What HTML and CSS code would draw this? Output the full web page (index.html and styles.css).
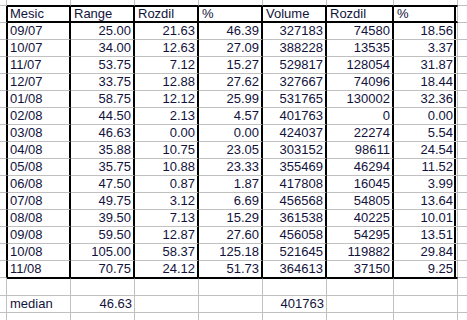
FILE: index.html
```html
<!DOCTYPE html>
<html>
<head>
<meta charset="utf-8">
<link rel="stylesheet" href="styles.css">
</head>
<body>
<div class="sheet">
  <div class="x"></div><div class="t"></div><div class="t"></div><div class="t"></div><div class="t"></div><div class="t"></div><div class="t"></div><div class="t"></div><div class="x"></div>

  <div class="lb"></div><div class="h a c">Mesic</div><div class="h c">Range</div><div class="h c">Rozdil</div><div class="h c">%</div><div class="h c">Volume</div><div class="h c">Rozdil</div><div class="h g">%</div><div></div>

  <div class="lb"></div><div class="a c">09/07</div><div class="c n">25.00</div><div class="c n">21.63</div><div class="c n">46.39</div><div class="c n">327183</div><div class="c n">74580</div><div class="g n">18.56</div><div></div>
  <div class="lb"></div><div class="a c">10/07</div><div class="c n">34.00</div><div class="c n">12.63</div><div class="c n">27.09</div><div class="c n">388228</div><div class="c n">13535</div><div class="g n">3.37</div><div></div>
  <div class="lb"></div><div class="a c">11/07</div><div class="c n">53.75</div><div class="c n">7.12</div><div class="c n">15.27</div><div class="c n">529817</div><div class="c n">128054</div><div class="g n">31.87</div><div></div>
  <div class="lb"></div><div class="a c">12/07</div><div class="c n">33.75</div><div class="c n">12.88</div><div class="c n">27.62</div><div class="c n">327667</div><div class="c n">74096</div><div class="g n">18.44</div><div></div>
  <div class="lb"></div><div class="a c">01/08</div><div class="c n">58.75</div><div class="c n">12.12</div><div class="c n">25.99</div><div class="c n">531765</div><div class="c n">130002</div><div class="g n">32.36</div><div></div>
  <div class="lb"></div><div class="a c">02/08</div><div class="c n">44.50</div><div class="c n">2.13</div><div class="c n">4.57</div><div class="c n">401763</div><div class="c n">0</div><div class="g n">0.00</div><div></div>
  <div class="lb"></div><div class="a c">03/08</div><div class="c n">46.63</div><div class="c n">0.00</div><div class="c n">0.00</div><div class="c n">424037</div><div class="c n">22274</div><div class="g n">5.54</div><div></div>
  <div class="lb"></div><div class="a c">04/08</div><div class="c n">35.88</div><div class="c n">10.75</div><div class="c n">23.05</div><div class="c n">303152</div><div class="c n">98611</div><div class="g n">24.54</div><div></div>
  <div class="lb"></div><div class="a c">05/08</div><div class="c n">35.75</div><div class="c n">10.88</div><div class="c n">23.33</div><div class="c n">355469</div><div class="c n">46294</div><div class="g n">11.52</div><div></div>
  <div class="lb"></div><div class="a c">06/08</div><div class="c n">47.50</div><div class="c n">0.87</div><div class="c n">1.87</div><div class="c n">417808</div><div class="c n">16045</div><div class="g n">3.99</div><div></div>
  <div class="lb"></div><div class="a c">07/08</div><div class="c n">49.75</div><div class="c n">3.12</div><div class="c n">6.69</div><div class="c n">456568</div><div class="c n">54805</div><div class="g n">13.64</div><div></div>
  <div class="lb"></div><div class="a c">08/08</div><div class="c n">39.50</div><div class="c n">7.13</div><div class="c n">15.29</div><div class="c n">361538</div><div class="c n">40225</div><div class="g n">10.01</div><div></div>
  <div class="lb"></div><div class="a c">09/08</div><div class="c n">59.50</div><div class="c n">12.87</div><div class="c n">27.60</div><div class="c n">456058</div><div class="c n">54295</div><div class="g n">13.51</div><div></div>
  <div class="lb"></div><div class="a c">10/08</div><div class="c n">105.00</div><div class="c n">58.37</div><div class="c n">125.18</div><div class="c n">521645</div><div class="c n">119882</div><div class="g n">29.84</div><div></div>
  <div class="lb"></div><div class="a c l">11/08</div><div class="c n l">70.75</div><div class="c n l">24.12</div><div class="c n l">51.73</div><div class="c n l">364613</div><div class="c n l">37150</div><div class="g n l">9.25</div><div></div>

  <div></div><div class="tb"></div><div class="tb"></div><div class="tb"></div><div class="tb"></div><div class="tb"></div><div class="tb"></div><div class="tb"></div><div></div>

  <div></div><div class="p">median</div><div class="n">46.63</div><div></div><div></div><div class="n">401763</div><div></div><div></div><div></div>

  <div></div><div></div><div></div><div></div><div></div><div></div><div></div><div></div><div></div>
</div>
</body>
</html>
```
FILE: styles.css
```css
* {
  box-sizing: border-box;
  margin: 0;
  padding: 0;
}

html, body {
  background: #ffffff;
}

body {
  overflow: hidden;
  font-family: "Liberation Sans", Arial, sans-serif;
  font-size: 13px;
  color: #12123c;
}

.sheet {
  display: grid;
  grid-template-columns: 7px 64px 64px 64px 64px 64px 67px 64px 30px;
  grid-template-rows: 6px 17px repeat(15, 17px) 18px 17px 17px;
}

.sheet > div {
  border-right: 1px solid #c0c0c0;
  border-bottom: 1px solid #c0c0c0;
  line-height: 16px;
  white-space: nowrap;
  padding: 0 2px 0 3px;
}

.sheet > .t {
  border-bottom-color: #000;
}

.sheet > .lb {
  border-right-color: #000;
}

.sheet > .a {
  border-left: 1px solid #000;
  padding-left: 2px;
}

.sheet > .c {
  border-right: 2px solid #000;
}

.sheet > .g {
  box-shadow: inset -1px 0 0 #fff, inset -3px 0 0 #000;
  padding-right: 4px;
}

.sheet > .h {
  border-top: 1px solid #000;
  border-bottom: 2px solid #000;
  line-height: 14px;
}

.sheet > .l {
  border-bottom-color: #000;
}

.sheet > .tb {
  border-top: 1px solid #000;
}

.sheet > .n {
  text-align: right;
}

.sheet > .p {
  padding-left: 3px;
}
```
